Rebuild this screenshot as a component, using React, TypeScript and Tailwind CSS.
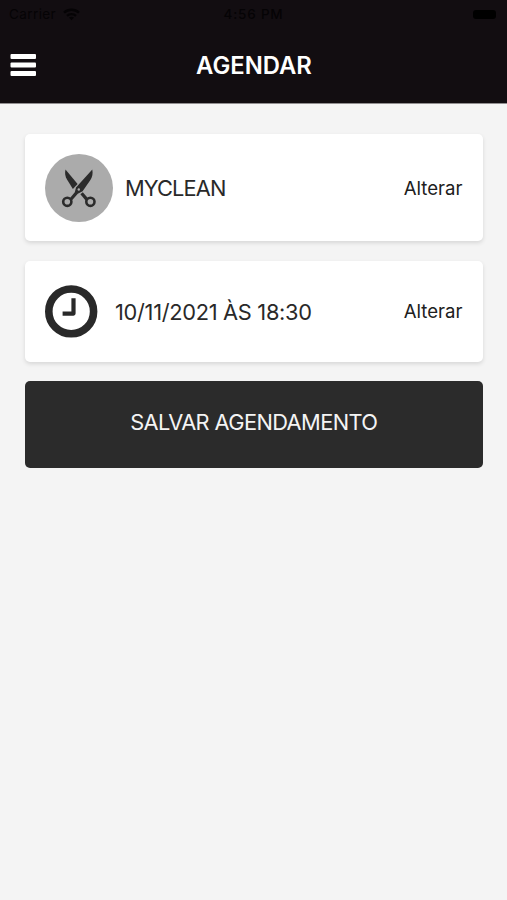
import { ReactNode } from "react"

function StatusBar() {
  return (
    <div className="grid h-7 grid-cols-3 items-center pl-[9px] pr-[11px] text-[13.5px] leading-none text-[#050305]">
      <div className="flex items-center gap-[7px]">
        <span className="pt-px tracking-[0.4px]">Carrier</span>
        <svg width="17" height="13" viewBox="0 0 17 13" fill="none" stroke="currentColor" strokeWidth="2.4">
          <path d="M1 4.6C5.2.7 11.8.7 16 4.6" />
          <path d="M4 7.8C6.5 5.6 10.5 5.6 13 7.8" />
          <path d="M6 9.6C7.5 8.6 9.5 8.6 11 9.6L8.5 12.2Z" fill="currentColor" stroke="none" />
        </svg>
      </div>
      <span className="whitespace-nowrap pl-[2px] pt-px text-center font-medium tracking-[0.8px]">4:56 PM</span>
      <div className="h-[9px] w-[23px] justify-self-end rounded-[3px] bg-black" />
    </div>
  )
}

function Scissors() {
  return (
    <svg width="68" height="68" viewBox="0 0 68 68" fill="none">
      <path d="M20.5 15.5C19.6 19.2 20.2 22.6 22 25.6L27.9 34.9L32.6 29.9Z" fill="#2b2b2b" />
      <path d="M47.3 15.5C48.1 19.5 47.3 23 45.4 26L37.6 37.2L32.8 39.8L27.3 46L24.8 44.3L29.8 38.2L31 33.6Z" fill="#2b2b2b" />
      <path d="M36.6 39.3L42 45.6" stroke="#2b2b2b" strokeWidth="3.2" />
      <circle cx="22.3" cy="47.8" r="4.1" stroke="#2b2b2b" strokeWidth="2.6" />
      <circle cx="45.4" cy="47.8" r="4.1" stroke="#2b2b2b" strokeWidth="2.6" />
      <circle cx="33.8" cy="35.5" r="1.2" fill="#ababab" />
    </svg>
  )
}

function Clock() {
  return (
    <svg width="53" height="53" viewBox="0 0 53 53" fill="none" stroke="#292929">
      <circle cx="26.2" cy="26.4" r="22.4" strokeWidth="7.6" />
      <path d="M28.5 13.3V28.6H17.6" strokeWidth="4.2" strokeLinejoin="round" />
    </svg>
  )
}

function Card({ className, children }: { className: string; children: ReactNode }) {
  return (
    <section className={`flex items-center rounded-[5px] bg-white px-5 shadow-[0_2px_4px_rgba(0,0,0,0.12)] ${className}`}>
      {children}
      <button className="ml-auto pt-[2px] text-[18.6px] text-[#202020]">Alterar</button>
    </section>
  )
}

export default function App() {
  return (
    <main className="min-h-[900px] w-full bg-[#f4f4f4] font-['Inter',sans-serif]">
      <header className="h-[103px] bg-[#120d11] shadow-[0_1px_0_#918e90]">
        <StatusBar />
        <div className="grid h-[75px] grid-cols-[1fr_auto_1fr] items-center px-[10px]">
          <button className="pb-[2px]" aria-label="Menu">
            <svg width="26" height="22" viewBox="0 0 26 22" fill="white">
              <rect x="0.5" y="0" width="25.5" height="5" rx="1" />
              <rect x="0.5" y="8.5" width="25.5" height="5" rx="1" />
              <rect x="0.5" y="17" width="25.5" height="5" rx="1" />
            </svg>
          </button>
          <h1 className="pl-px pt-px text-[23.8px] font-semibold text-white">AGENDAR</h1>
        </div>
      </header>

      <div className="flex flex-col pl-[25px] pr-[24.5px] pt-[31px]">
        <Card className="h-[107px]">
          <div className="size-[68px] rounded-full bg-[#ababab]">
            <Scissors />
          </div>
          <span className="ml-3 pt-[2px] text-[21.8px] tracking-[-0.85px] text-[#292929]">MYCLEAN</span>
        </Card>

        <Card className="mt-5 h-[100.5px]">
          <Clock />
          <span className="ml-[17px] pt-[2px] text-[21.8px] tracking-[-0.3px] text-[#292929]">10/11/2021 ÀS 18:30</span>
        </Card>

        <button className="mt-[19.5px] h-[87px] rounded-[5px] bg-[#2b2b2b] pb-1 text-[21.8px] tracking-[-0.6px] text-[#f4f4f4]">
          SALVAR AGENDAMENTO
        </button>
      </div>
    </main>
  )
}
